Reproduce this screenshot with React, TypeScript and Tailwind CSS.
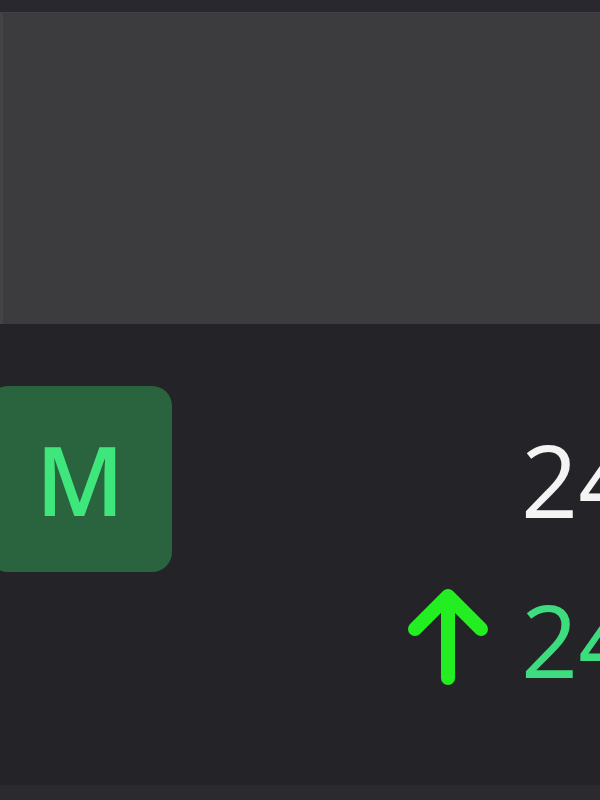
const font = { fontFamily: '"Open Sans", "Noto Sans", sans-serif' };

function ArrowUp() {
  return (
    <svg width="96" height="108" viewBox="0 0 96 108" fill="none" className="shrink-0">
      <path
        d="M48 14V95M15 46L48 13L81 46"
        stroke="#22ee22"
        strokeWidth="14"
        strokeLinecap="round"
        strokeLinejoin="round"
      />
    </svg>
  );
}

export default function App() {
  return (
    <div className="w-[600px] h-[800px] overflow-hidden bg-[#242428] flex flex-col" style={font}>
      <div className="h-[12px] bg-[#28282e]" />
      <div className="h-[312px] bg-[#3c3c3f] border-l-[3px] border-[#444448] border-t border-t-[#424246]" />

      <div className="flex-1 flex items-start pt-[62px]">
        <div className="ml-[-12px] w-[184px] h-[186px] shrink-0 rounded-[20px] bg-[#29643e] flex items-center justify-center">
          <span className="text-[96px] leading-none font-semibold text-[#3fe67c]">M</span>
        </div>

        <div className="ml-[228px] flex flex-col pt-[43px]">
          <div className="pl-[121px] text-[100px] leading-none text-[#f4f4f4] whitespace-nowrap">24</div>
          <div className="flex items-start gap-[25px] mt-[54px]">
            <ArrowUp />
            <span className="mt-[6px] text-[100px] leading-none text-[#3ddc7e] whitespace-nowrap">24</span>
          </div>
        </div>
      </div>

      <div className="h-[15px] bg-[#2a2a2f]" />
    </div>
  );
}
